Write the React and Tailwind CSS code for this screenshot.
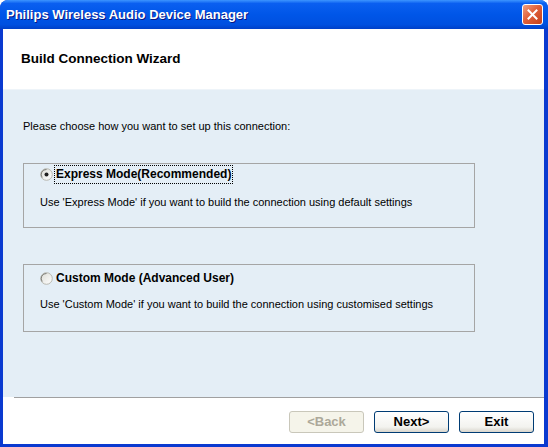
// Wireless audio device manager — first page of the connection wizard.
import { useState } from 'react'

const ui = "font-['Liberation_Sans',Arial,sans-serif]"

function Radio({ checked }) {
  return (
    <svg width="13" height="13" viewBox="0 0 13 13" className="shrink-0">
      <defs>
        <linearGradient id={checked ? 'rg1' : 'rg2'} x1="0" y1="0" x2="1" y2="1">
          <stop offset="0" stopColor="#dcdcd5" />
          <stop offset="1" stopColor="#ffffff" />
        </linearGradient>
      </defs>
      <circle cx="6.5" cy="6.5" r="5.8" fill={`url(#${checked ? 'rg1' : 'rg2'})`} stroke="#b8b8b0" strokeWidth="1" />
      <path d="M2.2 9.5 A5 5 0 0 1 6.5 1.5" fill="none" stroke="#7d7d78" strokeWidth="1" />
      {checked && <circle cx="6.5" cy="6.5" r="2" fill="#1f1f1f" />}
    </svg>
  )
}

function ModeBox({ checked, label, text, onPick, className, gap }) {
  return (
    <div className={`ml-5 w-[452px] border border-[#a5a5a5] ${className}`}>
      <button type="button" onClick={onPick} className="flex items-center gap-[2px] pl-4 text-left">
        <Radio checked={checked} />
        <span
          className={`px-[1px] py-[2px] text-[12px] leading-[13px] font-bold text-black ${
            checked ? 'outline-1 outline-dotted outline-black' : 'outline-1 outline-transparent'
          }`}
        >
          {label}
        </span>
      </button>
      <p className={`pl-4 text-[11px] leading-[13px] text-black ${gap}`}>{text}</p>
    </div>
  )
}

function WizButton({ children, disabled }) {
  return (
    <button
      type="button"
      disabled={disabled}
      className={`h-[22px] w-[75px] rounded-[3px] border text-[13px] font-bold ${
        disabled
          ? 'border-[#c9c7ba] bg-[#f5f4ea] text-[#aca899]'
          : 'border-[#003c74] bg-[linear-gradient(to_bottom,#ffffff,#f3f3ef_75%,#d8d5cc)] text-black'
      }`}
    >
      {children}
    </button>
  )
}

export default function App() {
  const [mode, setMode] = useState('express')

  return (
    <div className={`${ui} flex h-[447px] w-[548px] flex-col rounded-t-[8px] bg-[#0a3ad0] pb-[3px] pl-[3px] pr-[4px]`}>
      <div className="-mx-[3px] -mr-[4px] flex h-[29px] shrink-0 items-center justify-between rounded-t-[8px] bg-[linear-gradient(to_bottom,#3d95ff,#0a5ff0_12%,#0056e8_50%,#0050e0_85%,#0040c8)] pl-[6px] pr-[5px]">
        <span className="text-[13px] font-bold text-white [text-shadow:1px_1px_0_#0a1883]">
          Philips Wireless Audio Device Manager
        </span>
        <div className="flex h-[21px] w-[21px] items-center justify-center rounded-[3px] border border-white bg-[linear-gradient(135deg,#f0a080,#e0603a_45%,#c4401a)]">
          <svg width="11" height="11" viewBox="0 0 11 11">
            <path d="M1.5 1.5 L9.5 9.5 M9.5 1.5 L1.5 9.5" stroke="#fff" strokeWidth="2" strokeLinecap="square" />
          </svg>
        </div>
      </div>

      <div className="flex flex-1 flex-col bg-white">
        <div className="flex h-[60px] shrink-0 items-center pl-[18px]">
          <h1 className="text-[13.5px] font-bold text-black">Build Connection Wizard</h1>
        </div>

        <div className="flex h-[308px] shrink-0 flex-col border-t border-[#eef4f9] bg-[#e4eef6]">
          <p className="ml-5 mt-[30px] text-[11px] leading-[13px] text-black">
            Please choose how you want to set up this connection:
          </p>
          <ModeBox
            className="mt-[30px] h-[65px] pt-[2px]"
            gap="mt-[13px]"
            checked={mode === 'express'}
            onPick={() => setMode('express')}
            label="Express Mode(Recommended)"
            text="Use 'Express Mode' if you want to build the connection using default settings"
          />
          <ModeBox
            className="mt-[36px] h-[68px] pt-[5px]"
            gap="mt-[11px]"
            checked={mode === 'custom'}
            onPick={() => setMode('custom')}
            label="Custom Mode (Advanced User)"
            text="Use 'Custom Mode' if you want to build the connection using customised settings"
          />
        </div>

        <div className="ml-[11px] h-px shrink-0 bg-[#a0a0a0]" />

        <div className="flex flex-1 items-start justify-end gap-[10px] pr-[10px] pt-[13px]">
          <WizButton disabled>&lt;Back</WizButton>
          <WizButton>Next&gt;</WizButton>
          <WizButton>Exit</WizButton>
        </div>
      </div>
    </div>
  )
}
